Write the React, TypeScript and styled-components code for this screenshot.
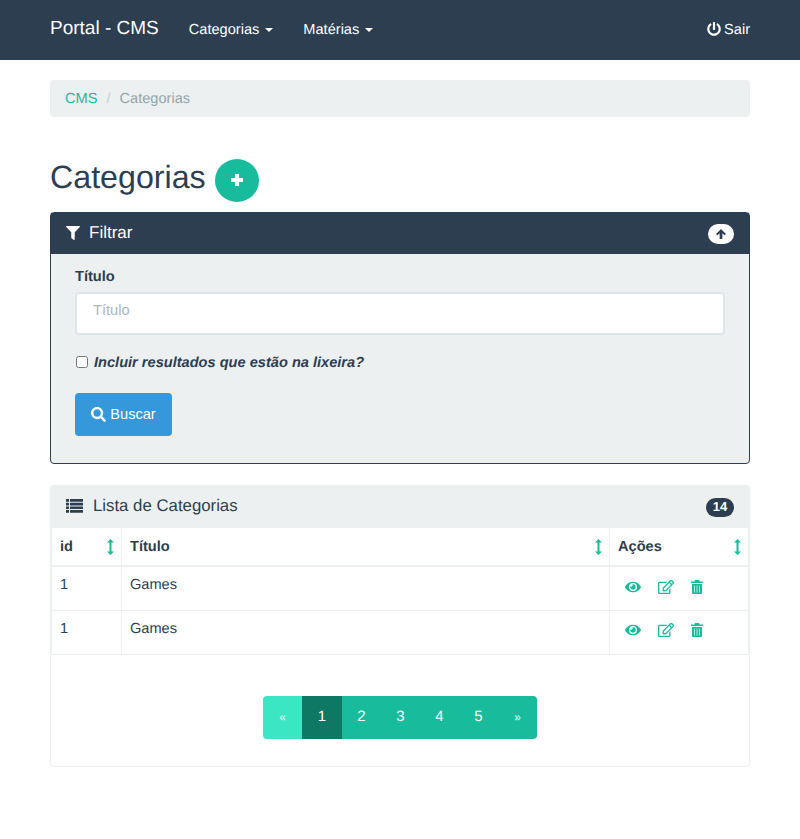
import { useState } from 'react';
import styled, { createGlobalStyle } from 'styled-components';
import { FaEye, FaFilter, FaPowerOff, FaRegEdit, FaSearch } from 'react-icons/fa';

const rows = [
  { id: 1, title: 'Games' },
  { id: 1, title: 'Games' },
];

const pages = ['«', '1', '2', '3', '4', '5', '»'];

const SortIcon = () => (
  <SortSvg width="7" height="16" viewBox="0 0 7 16">
    <path d="M3.5 0 L7 3.5 H4.5 V12.5 H7 L3.5 16 L0 12.5 H2.5 V3.5 H0 Z" fill="currentColor" />
  </SortSvg>
);

const PlusIcon = () => (
  <svg width="12" height="12" viewBox="0 0 12 12">
    <path d="M4 0 H8 V4 H12 V8 H8 V12 H4 V8 H0 V4 H4 Z" fill="currentColor" />
  </svg>
);

const ArrowUpIcon = () => (
  <svg width="10" height="10" viewBox="0 0 12 12">
    <path d="M6 0 L12 6 L10.2 7.6 L7.6 5 V12 H4.4 V5 L1.8 7.6 L0 6 Z" fill="currentColor" />
  </svg>
);

const ListIcon = () => (
  <svg width="17" height="14" viewBox="0 0 17 14">
    <path
      d="M0 0 H3 V2.7 H0 Z M4 0 H17 V2.7 H4 Z M0 3.7 H3 V6.4 H0 Z M4 3.7 H17 V6.4 H4 Z M0 7.4 H3 V10.1 H0 Z M4 7.4 H17 V10.1 H4 Z M0 11.1 H3 V13.8 H0 Z M4 11.1 H17 V13.8 H4 Z"
      fill="currentColor"
    />
  </svg>
);

const TrashIcon = () => (
  <svg width="12" height="14" viewBox="0 0 12 14">
    <path
      d="M4 0 H8 L8.6 1.5 H12 V3 H0 V1.5 H3.4 Z M1 4 H11 V13 Q11 14 10 14 H2 Q1 14 1 13 Z"
      fill="currentColor"
    />
    <path d="M3.5 5.5 V12.5 M6 5.5 V12.5 M8.5 5.5 V12.5" stroke="#fff" strokeWidth="0.9" opacity="0.75" />
  </svg>
);

const Caret = styled.span`
  display: inline-block;
  width: 0;
  height: 0;
  margin-left: 3px;
  vertical-align: middle;
  border-top: 4px solid #fff;
  border-left: 4px solid transparent;
  border-right: 4px solid transparent;
`;

const PowerIcon = styled(FaPowerOff)`
  margin-bottom: 3px;
`;

const App = () => {
  const [titulo, setTitulo] = useState('');

  return (
    <>
      <GlobalStyle />
      <Navbar>
        <NavLeft>
          <Brand>Portal - CMS</Brand>
          <NavLink>
            Categorias <Caret />
          </NavLink>
          <NavLink>
            Matérias <Caret />
          </NavLink>
        </NavLeft>
        <NavLink>
          <PowerIcon size={14} /> Sair
        </NavLink>
      </Navbar>

      <Container>
        <Breadcrumb>
          <CrumbLink>CMS</CrumbLink>
          <CrumbSep>/</CrumbSep>
          <CrumbCurrent>Categorias</CrumbCurrent>
        </Breadcrumb>

        <PageTitle>
          <TitleText>Categorias</TitleText>
          <AddButton aria-label="Adicionar">
            <PlusIcon />
          </AddButton>
        </PageTitle>

        <FilterPanel>
          <FilterHeading>
            <HeadingLabel>
              <FaFilter size={14} />
              Filtrar
            </HeadingLabel>
            <TogglePill>
              <ArrowUpIcon />
            </TogglePill>
          </FilterHeading>
          <FilterBody>
            <FieldLabel htmlFor="titulo">Título</FieldLabel>
            <TextInput
              id="titulo"
              placeholder="Título"
              value={titulo}
              onChange={(e) => setTitulo(e.target.value)}
            />
            <CheckRow>
              <input type="checkbox" />
              <span>Incluir resultados que estão na lixeira?</span>
            </CheckRow>
            <SearchButton>
              <FaSearch size={15} />
              Buscar
            </SearchButton>
          </FilterBody>
        </FilterPanel>

        <ListPanel>
          <ListHeading>
            <ListLabel>
              <ListIcon />
              Lista de Categorias
            </ListLabel>
            <Badge>14</Badge>
          </ListHeading>
          <Table>
            <thead>
              <tr>
                <HeadCell $width={70}>
                  <HeadInner>
                    id
                    <SortIcon />
                  </HeadInner>
                </HeadCell>
                <HeadCell>
                  <HeadInner>
                    Título
                    <SortIcon />
                  </HeadInner>
                </HeadCell>
                <HeadCell $width={139}>
                  <HeadInner>
                    Ações
                    <SortIcon />
                  </HeadInner>
                </HeadCell>
              </tr>
            </thead>
            <tbody>
              {rows.map((row, i) => (
                <tr key={i}>
                  <Cell>{row.id}</Cell>
                  <Cell>{row.title}</Cell>
                  <Cell>
                    <Actions>
                      <FaEye size={16} />
                      <FaRegEdit size={16} />
                      <TrashIcon />
                    </Actions>
                  </Cell>
                </tr>
              ))}
            </tbody>
          </Table>
          <PagerWrap>
            <Pager>
              {pages.map((page, i) => (
                <PageItem
                  key={i}
                  $active={page === '1'}
                  $disabled={page === '«'}
                  $small={page === '«' || page === '»'}
                >
                  {page}
                </PageItem>
              ))}
            </Pager>
          </PagerWrap>
        </ListPanel>
      </Container>
    </>
  );
};

export default App;

const GlobalStyle = createGlobalStyle`
  * {
    box-sizing: border-box;
  }
  body {
    margin: 0;
    background: #fff;
    color: #2c3e50;
    font-family: 'Liberation Sans', Arial, sans-serif;
    font-size: 14.6px;
    line-height: 20px;
    text-rendering: geometricPrecision;
  }
`;

const Navbar = styled.nav`
  height: 60px;
  padding: 0 50px;
  display: flex;
  align-items: center;
  justify-content: space-between;
  background: #2c3e50;
  color: #fff;
`;

const NavLeft = styled.div`
  display: flex;
  align-items: center;
  gap: 30px;
`;

const Brand = styled.a`
  font-size: 19px;
  margin-bottom: 2px;
`;

const NavLink = styled.a`
  display: flex;
  align-items: center;
  gap: 3px;
  color: #fff;
`;

const Container = styled.main`
  padding: 20px 50px 0;
`;

const Breadcrumb = styled.div`
  height: 37px;
  padding: 9px 15px 0;
  display: flex;
  background: #ecf0f1;
  border-radius: 4px;
`;

const CrumbLink = styled.a`
  color: #18bc9c;
`;

const CrumbSep = styled.span`
  padding: 0 9px;
  color: #ccc;
`;

const CrumbCurrent = styled.span`
  color: #95a5a6;
`;

const PageTitle = styled.h2`
  margin: 42px 0 10px;
  height: 43px;
  display: flex;
  align-items: center;
  gap: 9px;
  font-size: 32.2px;
  font-weight: 400;
  line-height: 35px;
`;

const TitleText = styled.span`
  margin-bottom: 6px;
`;

const AddButton = styled.button`
  width: 44px;
  height: 43px;
  padding: 0 0 1px;
  display: flex;
  align-items: center;
  justify-content: center;
  border: 0;
  border-radius: 50%;
  background: #18bc9c;
  color: #fff;
`;

const FilterPanel = styled.section`
  border: 1px solid #2c3e50;
  border-radius: 4px;
  background: #ecf0f1;
`;

const FilterHeading = styled.header`
  height: 41px;
  padding: 0 15px;
  display: flex;
  align-items: center;
  justify-content: space-between;
  background: #2c3e50;
  color: #fff;
`;

const HeadingLabel = styled.div`
  display: flex;
  align-items: center;
  gap: 9px;
  padding-bottom: 2px;
  font-size: 17px;
`;

const TogglePill = styled.span`
  width: 26px;
  height: 20px;
  display: flex;
  align-items: center;
  justify-content: center;
  border-radius: 10px;
  background: #fff;
  color: #2c3e50;
`;

const FilterBody = styled.div`
  padding: 13px 24px 27px;
  display: flex;
  flex-direction: column;
  align-items: flex-start;
`;

const FieldLabel = styled.label`
  margin-bottom: 5px;
  font-weight: 700;
`;

const TextInput = styled.input`
  width: 100%;
  height: 43px;
  padding: 0 16px 8px;
  border: 2px solid #dce4ec;
  border-radius: 4px;
  background: #fff;
  color: #2c3e50;
  font: inherit;
  outline: none;

  &::placeholder {
    color: #acb6c0;
  }
`;

const CheckRow = styled.label`
  margin-top: 16px;
  display: flex;
  align-items: center;
  gap: 6px;
  font-style: italic;
  font-weight: 700;

  input {
    width: 12px;
    height: 12px;
    margin: 0 0 0 1px;
  }

  span {
    padding-top: 2px;
  }
`;

const SearchButton = styled.button`
  margin-top: 20px;
  width: 97px;
  height: 43px;
  padding: 0 0 1px;
  display: flex;
  align-items: center;
  justify-content: center;
  gap: 4px;
  border: 0;
  border-radius: 4px;
  background: #3498db;
  color: #fff;
  font: inherit;
`;

const ListPanel = styled.section`
  margin-top: 21px;
  border: 1px solid #ecf0f1;
  border-radius: 4px;
  box-shadow: 0 1px 1px rgba(0, 0, 0, 0.05);
`;

const ListHeading = styled.header`
  height: 42px;
  padding: 0 15px;
  display: flex;
  align-items: center;
  justify-content: space-between;
  background: #ecf0f1;
`;

const ListLabel = styled.div`
  display: flex;
  align-items: center;
  gap: 10px;
  padding-bottom: 3px;
  font-size: 16.8px;
`;

const Badge = styled.span`
  width: 28px;
  height: 19px;
  display: flex;
  align-items: center;
  justify-content: center;
  border-radius: 10px;
  background: #2c3e50;
  color: #fff;
  font-size: 13px;
  font-weight: 700;
`;

const Table = styled.table`
  width: 100%;
  border-collapse: collapse;
  table-layout: fixed;
`;

const HeadCell = styled.th<{ $width?: number }>`
  width: ${({ $width }) => ($width ? `${$width}px` : 'auto')};
  height: 38px;
  padding: 0 7px 0 8px;
  border: 1px solid #ecf0f1;
  border-top: 0;
  border-bottom-width: 2px;
  text-align: left;
  font-weight: 700;
`;

const HeadInner = styled.div`
  display: flex;
  align-items: center;
  justify-content: space-between;
`;

const SortSvg = styled.svg`
  color: #18bc9c;
`;

const Cell = styled.td`
  height: 44px;
  padding: 8px;
  border: 1px solid #ecf0f1;
  vertical-align: top;
`;

const Actions = styled.div`
  height: 23px;
  padding-left: 7px;
  display: flex;
  align-items: center;
  gap: 17px;
  color: #18bc9c;
`;

const PagerWrap = styled.div`
  padding: 41px 0 27px;
  display: flex;
  justify-content: center;
`;

const Pager = styled.div`
  display: flex;
  border-radius: 4px;
  overflow: hidden;
`;

const pageColor = ($active?: boolean, $disabled?: boolean) => {
  if ($active) return '#0f7864';
  if ($disabled) return '#3be6c4';
  return '#18bc9c';
};

const PageItem = styled.a<{ $active?: boolean; $disabled?: boolean; $small?: boolean }>`
  width: ${({ $active }) => ($active ? '40px' : '39px')};
  height: 43px;
  display: flex;
  align-items: center;
  justify-content: center;
  background: ${({ $active, $disabled }) => pageColor($active, $disabled)};
  color: #fff;
  font-size: ${({ $small }) => ($small ? '12px' : '15px')};
`;
